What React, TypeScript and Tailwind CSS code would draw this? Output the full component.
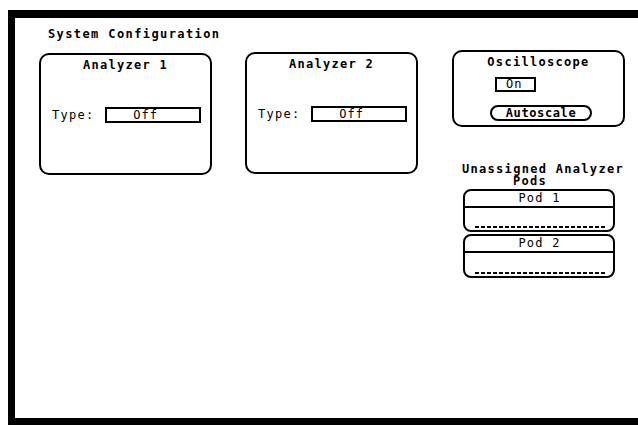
import React from "react";

const FONT = { fontFamily: '"DejaVu Sans Mono", "Liberation Mono", monospace' };

function Analyzer({ name, top }: { name: string; top: string }) {
  return (
    <div className={`${top} w-[173px] h-[122px] border-2 border-black rounded-[10px] pt-[4px] flex flex-col`}>
      <div className="text-center text-[12px] leading-[12px] font-bold tracking-[1.3px]">{name}</div>
      <div className="mt-[36px] pl-[11px] flex items-center">
        <span className="text-[12px] leading-[12px] tracking-[1.3px]">Type:</span>
        <div className="ml-[10px] w-[96px] h-[16px] border-2 border-black flex items-center justify-center pr-[14px] text-[12px] leading-[12px] tracking-[1px]">
          Off
        </div>
      </div>
    </div>
  );
}

function Pod({ name, h, mt }: { name: string; h: string; mt: string }) {
  return (
    <div className={`${h} ${mt} ml-[11px] w-[152px] border-2 border-black rounded-[8px] flex flex-col`}>
      <div className="h-[17px] border-b-2 border-black text-center text-[12px] leading-[15px] tracking-[1.2px] pl-[1px]">
        {name}
      </div>
      <div className="flex-1 flex flex-col justify-end pb-[2px] pl-[10px] pr-[6px]">
        <div className="h-[2px] bg-[repeating-linear-gradient(90deg,#000_0_4px,transparent_4px_6px)]" />
      </div>
    </div>
  );
}

export default function App() {
  return (
    <div className="w-[638px] h-[425px] bg-white pt-[10px] pl-[8px] overflow-hidden text-black" style={FONT}>
      <div className="h-[415px] border-t-[8px] border-l-[7px] border-b-[7px] border-black pt-[10px]">
        <div className="ml-[33px] text-[12px] leading-[12px] font-bold tracking-[1.4px]">System Configuration</div>
        <div className="mt-[10px] ml-[24px] flex items-start">
          <Analyzer name="Analyzer 1" top="mt-[3px]" />
          <div className="ml-[33px]">
            <Analyzer name="Analyzer 2" top="mt-[2px]" />
          </div>
          <div className="ml-[34px] w-[173px] flex flex-col">
            <div className="h-[77px] border-2 border-black rounded-[10px] pt-[4px] flex flex-col">
              <div className="text-center text-[12px] leading-[12px] font-bold tracking-[1.3px]">Oscilloscope</div>
              <div className="pl-[36px] flex flex-col items-start">
                <div className="mt-[9px] ml-[5px] w-[41px] h-[15px] border-2 border-black pl-[9px] text-[12px] leading-[11px] tracking-[1px]">
                  On
                </div>
                <div className="mt-[13px] w-[102px] h-[16px] border-2 border-black rounded-full flex items-center justify-center text-[12px] leading-[12px] font-bold tracking-[0.6px]">
                  Autoscale
                </div>
              </div>
            </div>
            <div className="mt-[36px] text-[12px] font-bold tracking-[1.3px]">
              <div className="ml-[10px] whitespace-nowrap leading-[13px]">Unassigned Analyzer</div>
              <div className="ml-[61px] leading-[11px]">Pods</div>
            </div>
            <Pod name="Pod 1" h="h-[43px]" mt="mt-[2px]" />
            <Pod name="Pod 2" h="h-[44px]" mt="mt-[2px]" />
          </div>
        </div>
      </div>
    </div>
  );
}
